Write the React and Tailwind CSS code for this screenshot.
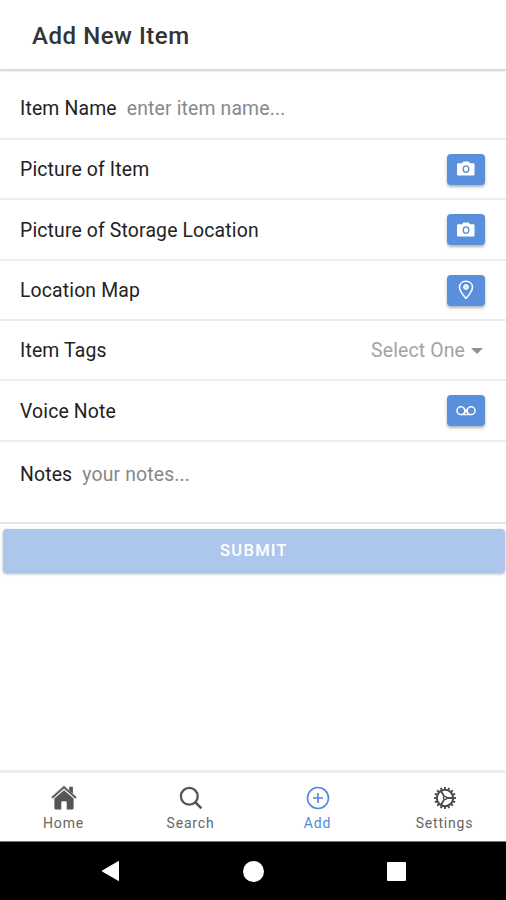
import React from "react";

function CameraIcon() {
  return (
    <svg width="20" height="16" viewBox="0 0 20 16" className="block">
      <path
        fillRule="evenodd"
        fill="#fff"
        d="M6.2 1.9 7.1.8Q7.5.4 8.1.4h3.8q.6 0 1 .4l.9 1.1q.3.4.8.4h2.7q1.200 0 1.200 1.200v10.100q0 1-1.200 1H2.200Q1 14.600 1 13.600V3.500Q1 2.300 2.200 2.300h3.200q.5 0 .8-.4ZM10 4.200a3.500 3.900 0 1 0 0 7.800 3.500 3.900 0 0 0 0-7.800Z"
      />
      <ellipse cx="10" cy="8.100" rx="2.100" ry="2.600" fill="#fff" />
    </svg>
  );
}

function PinIcon() {
  return (
    <svg width="18" height="22" viewBox="0 0 18 22" fill="none" stroke="#fff" strokeWidth="1.5" className="block">
      <path d="M9 2.200c-3.900 0-6.500 2.600-6.500 6.100 0 3.700 3.600 7.900 6.500 11.200 2.900-3.300 6.500-7.500 6.500-11.200 0-3.500-2.600-6.100-6.500-6.100Z" strokeLinejoin="round" />
      <circle cx="9" cy="8" r="2.100" strokeWidth="1.200" />
      <path d="M9 5v6M6 8h6" strokeWidth="1" />
    </svg>
  );
}

function VoicemailIcon() {
  return (
    <svg width="22" height="12" viewBox="0 0 22 12" fill="none" stroke="#fff" strokeWidth="1.500" className="block">
      <circle cx="5.900" cy="5.700" r="3.900" />
      <circle cx="16.100" cy="5.700" r="3.900" />
      <path d="M8.800 3.200 13.400 9.200M13.200 3.200 8.600 9.200M5.900 9.600h10.200" strokeWidth="1.300" />
    </svg>
  );
}

function HomeIcon() {
  return (
    <svg width="26" height="26" viewBox="0 0 26 26" fill="#555" className="block">
      <path d="M13 5.300 3.400 13.600v9.700q0 1.200 1.200 1.200h5.700v-7.300q0-1 1-1h3.400q1 0 1 1v7.300h5.700q1.200 0 1.200-1.200v-9.700Z" />
      <path d="M.8 12.800 13 2.200l12.200 10.600" fill="none" stroke="#ddd" strokeWidth="3.400" />
      <path d="M18.200 1.800h3.700v6.900l-3.700-3.200Z" />
      <path d="M1.100 12.800 13 2.200l11.900 10.600" fill="none" stroke="#555" strokeWidth="1.800" />
    </svg>
  );
}

function SearchIcon() {
  return (
    <svg width="24" height="24" viewBox="0 0 24 24" fill="none" stroke="#555" strokeWidth="2.300" className="block">
      <circle cx="10.300" cy="10.300" r="8.400" />
      <path d="m16.200 16.200 6.200 6.200" strokeWidth="2.600" />
    </svg>
  );
}

function AddIcon() {
  return (
    <svg width="24" height="24" viewBox="0 0 24 24" fill="none" stroke="#5189da" strokeWidth="1.600" className="block">
      <circle cx="12" cy="12" r="10.500" />
      <path d="M12 7v10M7 12h10" />
    </svg>
  );
}

const TEETH = Array.from({ length: 16 }, (_, i) => i * 22.5);

function GearIcon() {
  return (
    <svg width="24" height="24" viewBox="0 0 24 24" fill="none" stroke="#4c4c4c" className="block">
      <circle cx="12" cy="12" r="8.200" strokeWidth="2.100" />
      {TEETH.map((angle) => (
        <path key={angle} d="M12 3.500V1" strokeWidth="1.900" transform={`rotate(${angle} 12 12)`} />
      ))}
      <circle cx="12" cy="12" r="1.600" strokeWidth="1.400" />
      <path d="M13.600 12H20M11.100 10.400 8 5M11.100 13.600 8 19" strokeWidth="1.800" />
    </svg>
  );
}

function IconButton({ children }) {
  return (
    <button className="flex h-[31px] w-[38px] items-center justify-center rounded-[4px] bg-[#5a90db] shadow-[0_2px_3px_rgba(0,0,0,0.3)]">
      {children}
    </button>
  );
}

function Row({ label, children, className }) {
  return (
    <div className={`flex items-center justify-between border-b-2 border-[#ededed] pr-[21px] pl-5 ${className}`}>
      <span className="pt-[2px]">{label}</span>
      {children}
    </div>
  );
}

function Tab({ icon, label, className }) {
  return (
    <div className={`flex w-[127px] shrink-0 flex-col items-center ${className}`}>
      <div className="flex h-[26px] items-center">{icon}</div>
      <span className="mt-[3px] text-[14px] leading-[18px] tracking-[0.800px]">{label}</span>
    </div>
  );
}

export default function App() {
  return (
    <div className="flex h-[900px] w-[506px] flex-col overflow-hidden bg-white font-[Roboto,sans-serif] text-[19.400px] leading-6 tracking-[0.150px] text-[#222]">
      <header className="z-10 flex h-[70px] shrink-0 items-center border-b border-[#dadada] pt-[2px] pl-8 text-[24px] font-medium tracking-[0.550px] text-[#333] shadow-[0_1px_2px_rgba(0,0,0,0.2)]">
        <h1>Add New Item</h1>
      </header>
      <main className="flex-1">
        <div className="flex h-[70px] items-center gap-[10px] border-b-2 border-[#ededed] pt-[10px] pl-5">
          <span>Item Name</span>
          <span className="text-[#888]">enter item name...</span>
        </div>
        <Row label="Picture of Item" className="h-[60px]"><IconButton><CameraIcon /></IconButton></Row>
        <Row label="Picture of Storage Location" className="h-[61px]"><IconButton><CameraIcon /></IconButton></Row>
        <Row label="Location Map" className="h-[60px]"><IconButton><PinIcon /></IconButton></Row>
        <Row label="Item Tags" className="h-[60px]">
          <div className="flex items-center gap-[6px] pt-px pr-[2px] text-[#a3a3a3]">
            <span>Select One</span>
            <svg width="12" height="6" viewBox="0 0 12 6"><path d="M0 0h12L6 6Z" fill="#909090" /></svg>
          </div>
        </Row>
        <Row label="Voice Note" className="h-[61px]"><IconButton><VoicemailIcon /></IconButton></Row>
        <div className="flex h-[82px] items-start gap-[10px] border-b-2 border-[#e4e4e4] pt-[21px] pl-5">
          <span>Notes</span>
          <span className="text-[#888]">your notes...</span>
        </div>
        <button className="mt-[5px] ml-[3px] flex h-[44px] w-[502px] items-center justify-center rounded-[4px] bg-[#adc7ec] text-[16.500px] font-medium tracking-[1.300px] text-white shadow-[0_1px_3px_rgba(0,0,0,0.3)]">
          SUBMIT
        </button>
      </main>
      <nav className="flex h-[71px] shrink-0 border-t-[3px] border-[#eeeeee] pt-[12px] text-[#666]">
        <Tab icon={<HomeIcon />} label="Home" />
        <Tab icon={<SearchIcon />} label="Search" />
        <Tab icon={<AddIcon />} label="Add" className="text-[#5189da]" />
        <Tab icon={<GearIcon />} label="Settings" />
      </nav>
      <footer className="flex h-[59px] shrink-0 items-center justify-center gap-[123px] border-t border-[#777] bg-black">
        <svg width="19" height="22" viewBox="0 0 19 22"><path d="M17.500 1.500v19L1.200 11Z" fill="#fff" stroke="#fff" strokeLinejoin="round" /></svg>
        <div className="size-[21px] rounded-full bg-white" />
        <div className="size-[19px] rounded-[1px] bg-white" />
      </footer>
    </div>
  );
}
